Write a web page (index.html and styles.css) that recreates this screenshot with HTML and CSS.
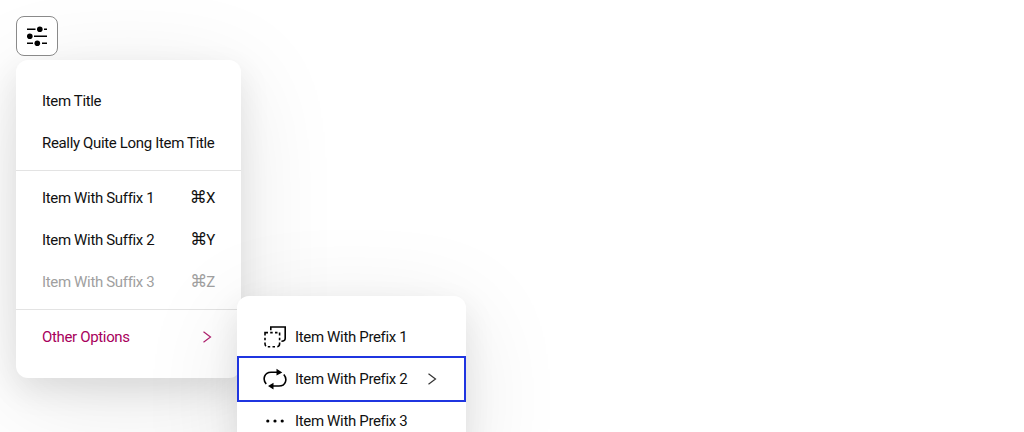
FILE: index.html
```html
<!DOCTYPE html>
<html lang="en">
<head>
<meta charset="utf-8">
<title>Menu</title>
<link rel="stylesheet" href="styles.css">
</head>
<body>
<button class="trigger" aria-label="Options">
<svg width="24" height="24" viewBox="0 0 24 24"><path d="M2 5.2h8.5M19 5.2h3M9 12.2h13M2 19.2h6M17 19.2h5" stroke="currentColor" stroke-width="1.5"/><circle cx="14.8" cy="5.2" r="2.8"/><circle cx="4.8" cy="12.2" r="2.8"/><circle cx="12.3" cy="19.2" r="2.8"/></svg>
</button>
<div class="menu" role="menu">
<div class="item" role="menuitem"><span>Item Title</span></div>
<div class="item" role="menuitem"><span>Really Quite Long Item Title</span></div>
<hr class="divider">
<div class="item" role="menuitem"><span>Item With Suffix 1</span><span class="suffix"><span class="cmd">⌘</span>X</span></div>
<div class="item" role="menuitem"><span>Item With Suffix 2</span><span class="suffix"><span class="cmd">⌘</span>Y</span></div>
<div class="item disabled" role="menuitem"><span>Item With Suffix 3</span><span class="suffix"><span class="cmd">⌘</span>Z</span></div>
<hr class="divider">
<div class="item open" role="menuitem"><span>Other Options</span><svg class="chevron" width="16" height="16" viewBox="0 0 16 16"><path d="M4.5 2.8l7 5.3-7 5.1"/></svg></div>
<div class="menu submenu" role="menu">
<div class="item" role="menuitem"><svg class="prefix" width="24" height="24" viewBox="0 0 24 24"><path d="M7.8 5.2V2h14.4v11.2c0 1.8-.8 3-3.8 3"/><path d="M2 10.5V7.6h3M7.2 7.6h2.5M12 7.6h2.5M16.6 7.6v3M16.6 12.7v2.6M16.6 17.5v1.3c0 1.6-.7 2.7-2.3 2.9M12 21.8H9.5M7.2 21.8H4.8M2 12.7v2.6M2 17.5v1.3c0 1 .3 1.8 1 2.3"/></svg><span>Item With Prefix 1</span></div>
<div class="item focused" role="menuitem"><svg class="prefix" width="24" height="24" viewBox="0 0 24 24"><path d="M3.2 17C-.7 12.4 1.2 5.2 8 5.2h7M20.8 7.4C24.7 12 22.8 19 16 19H9"/><path class="solid" d="M13.5 1.8l5.8 3.6-5.8 3.2zM10.5 15.7L5 19l5.5 3.5z"/></svg><span>Item With Prefix 2</span><svg class="chevron" width="16" height="16" viewBox="0 0 16 16"><path d="M4.5 2.8l7 5.3-7 5.1"/></svg></div>
<div class="item" role="menuitem"><svg class="prefix" width="24" height="24" viewBox="0 0 24 24"><g class="solid"><circle cx="4.8" cy="12" r="1.6"/><circle cx="12" cy="12" r="1.6"/><circle cx="19.2" cy="12" r="1.6"/></g></svg><span>Item With Prefix 3</span></div>
</div>
</div>
</body>
</html>
```
FILE: styles.css
```css
* { box-sizing: border-box; }
html { overflow: hidden; }
body {
  margin: 0;
  padding: 16px;
  height: 432px;
  overflow: hidden;
  background: #fff;
  color: #111;
  font: 400 15px/24px Roboto, "Liberation Sans", sans-serif;
  letter-spacing: -0.34px;
}
.trigger {
  position: relative;
  z-index: 1;
  display: flex;
  align-items: center;
  justify-content: center;
  width: 42px;
  height: 40px;
  padding: 0;
  border: 1px solid #8a8a8a;
  border-radius: 8px;
  background: #fff;
  color: #000;
}
.menu {
  position: relative;
  width: 225px;
  margin-top: 4px;
  padding: 20px 0;
  border-radius: 12px;
  background: #fff;
  box-shadow: 0 12px 32px rgba(0, 0, 0, .09), 0 20px 100px rgba(0, 0, 0, .1);
}
.item {
  display: flex;
  align-items: center;
  height: 42px;
  margin: 0 2px;
  padding: 0 24px;
  white-space: nowrap;
}
.divider {
  height: 1px;
  margin: 6px 0;
  border: 0;
  background: #e3e3e3;
}
.suffix, .chevron { margin-left: auto; }
.suffix { display: flex; }
.cmd {
  margin: -1px -0.5px 0 0;
  font-family: "DejaVu Sans", sans-serif;
  font-size: 17px;
}
.disabled { color: #a0a0a0; }
.open { color: #a8005c; }
.chevron, .prefix { fill: none; stroke: currentColor; flex: none; }
.chevron { color: #333; stroke-width: 1.2; }
.open .chevron { color: #b0206e; }
.prefix {
  margin-right: 8px;
  color: #000;
  stroke-width: 1.6;
}
.solid { fill: currentColor; stroke: none; }
.submenu {
  position: absolute;
  top: 236px;
  left: 221px;
  width: 229px;
  margin: 0;
}
.focused { outline: 2px solid #1f35e0; }
```
